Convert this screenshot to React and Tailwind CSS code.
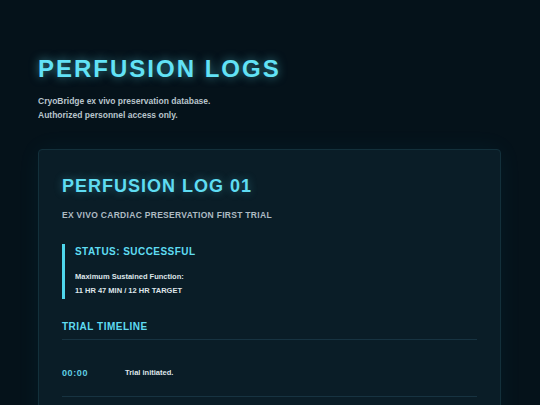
import React from 'react';

const events = [{ time: '00:00', text: 'Trial initiated.' }];

export default function App() {
  return (
    <div className="min-h-screen bg-[#05121a] font-['Liberation_Sans',Arial,sans-serif] px-[38px] pt-[53px] pb-10">
      {/* Header */}
      <h1 className="text-[24px] leading-[32px] font-bold tracking-[2px] text-[#62e2f6] [text-shadow:0_0_10px_rgba(98,226,246,0.55)]">
        PERFUSION LOGS
      </h1>
      <div className="mt-[9px] text-[8.5px] leading-[14px] font-bold text-[#b9c5cc]">
        <p>CryoBridge ex vivo preservation database.</p>
        <p>Authorized personnel access only.</p>
      </div>

      {/* Log card */}
      <div className="mt-[27px] w-[463px] rounded-[4px] border border-[#13303b] bg-[#0a1d27] px-[23px] pt-[23.5px] pb-10 shadow-[0_0_24px_rgba(40,180,220,0.06)]">
        <h2 className="text-[18px] leading-[24px] font-bold tracking-[1px] text-[#5fdcf2] [text-shadow:0_0_8px_rgba(95,220,242,0.35)]">
          PERFUSION LOG 01
        </h2>
        <p className="mt-[11px] text-[8.5px] leading-[12px] font-bold tracking-[0.3px] text-[#aebbc3]">
          EX VIVO CARDIAC PRESERVATION FIRST TRIAL
        </p>

        {/* Status */}
        <div className="mt-[23.5px] border-l-[3px] border-[#4fd6ec] pl-[10px] py-px">
          <p className="text-[10px] leading-[14px] font-bold tracking-[0.45px] text-[#5fdcf2]">
            STATUS: SUCCESSFUL
          </p>
          <div className="mt-[11px] text-[7.5px] leading-[14px] font-bold text-[#dfe6ea]">
            <p>Maximum Sustained Function:</p>
            <p>11 HR 47 MIN / 12 HR TARGET</p>
          </div>
        </div>

        {/* Timeline */}
        <h3 className="mt-[21px] pb-[5px] border-b border-[#173341] text-[10px] leading-[14px] font-bold tracking-[0.5px] text-[#5fdcf2]">
          TRIAL TIMELINE
        </h3>
        <div className="mt-[10px]">
          {events.map((e) => (
            <div key={e.time} className="flex items-center py-[16px] border-b border-[#173341]">
              <span className="w-[63px] shrink-0 text-[9px] leading-[14px] font-bold tracking-[0.6px] text-[#5fcfe3]">
                {e.time}
              </span>
              <span className="text-[7.5px] leading-[14px] font-bold text-[#dfe6ea]">{e.text}</span>
            </div>
          ))}
        </div>
      </div>
    </div>
  );
}
